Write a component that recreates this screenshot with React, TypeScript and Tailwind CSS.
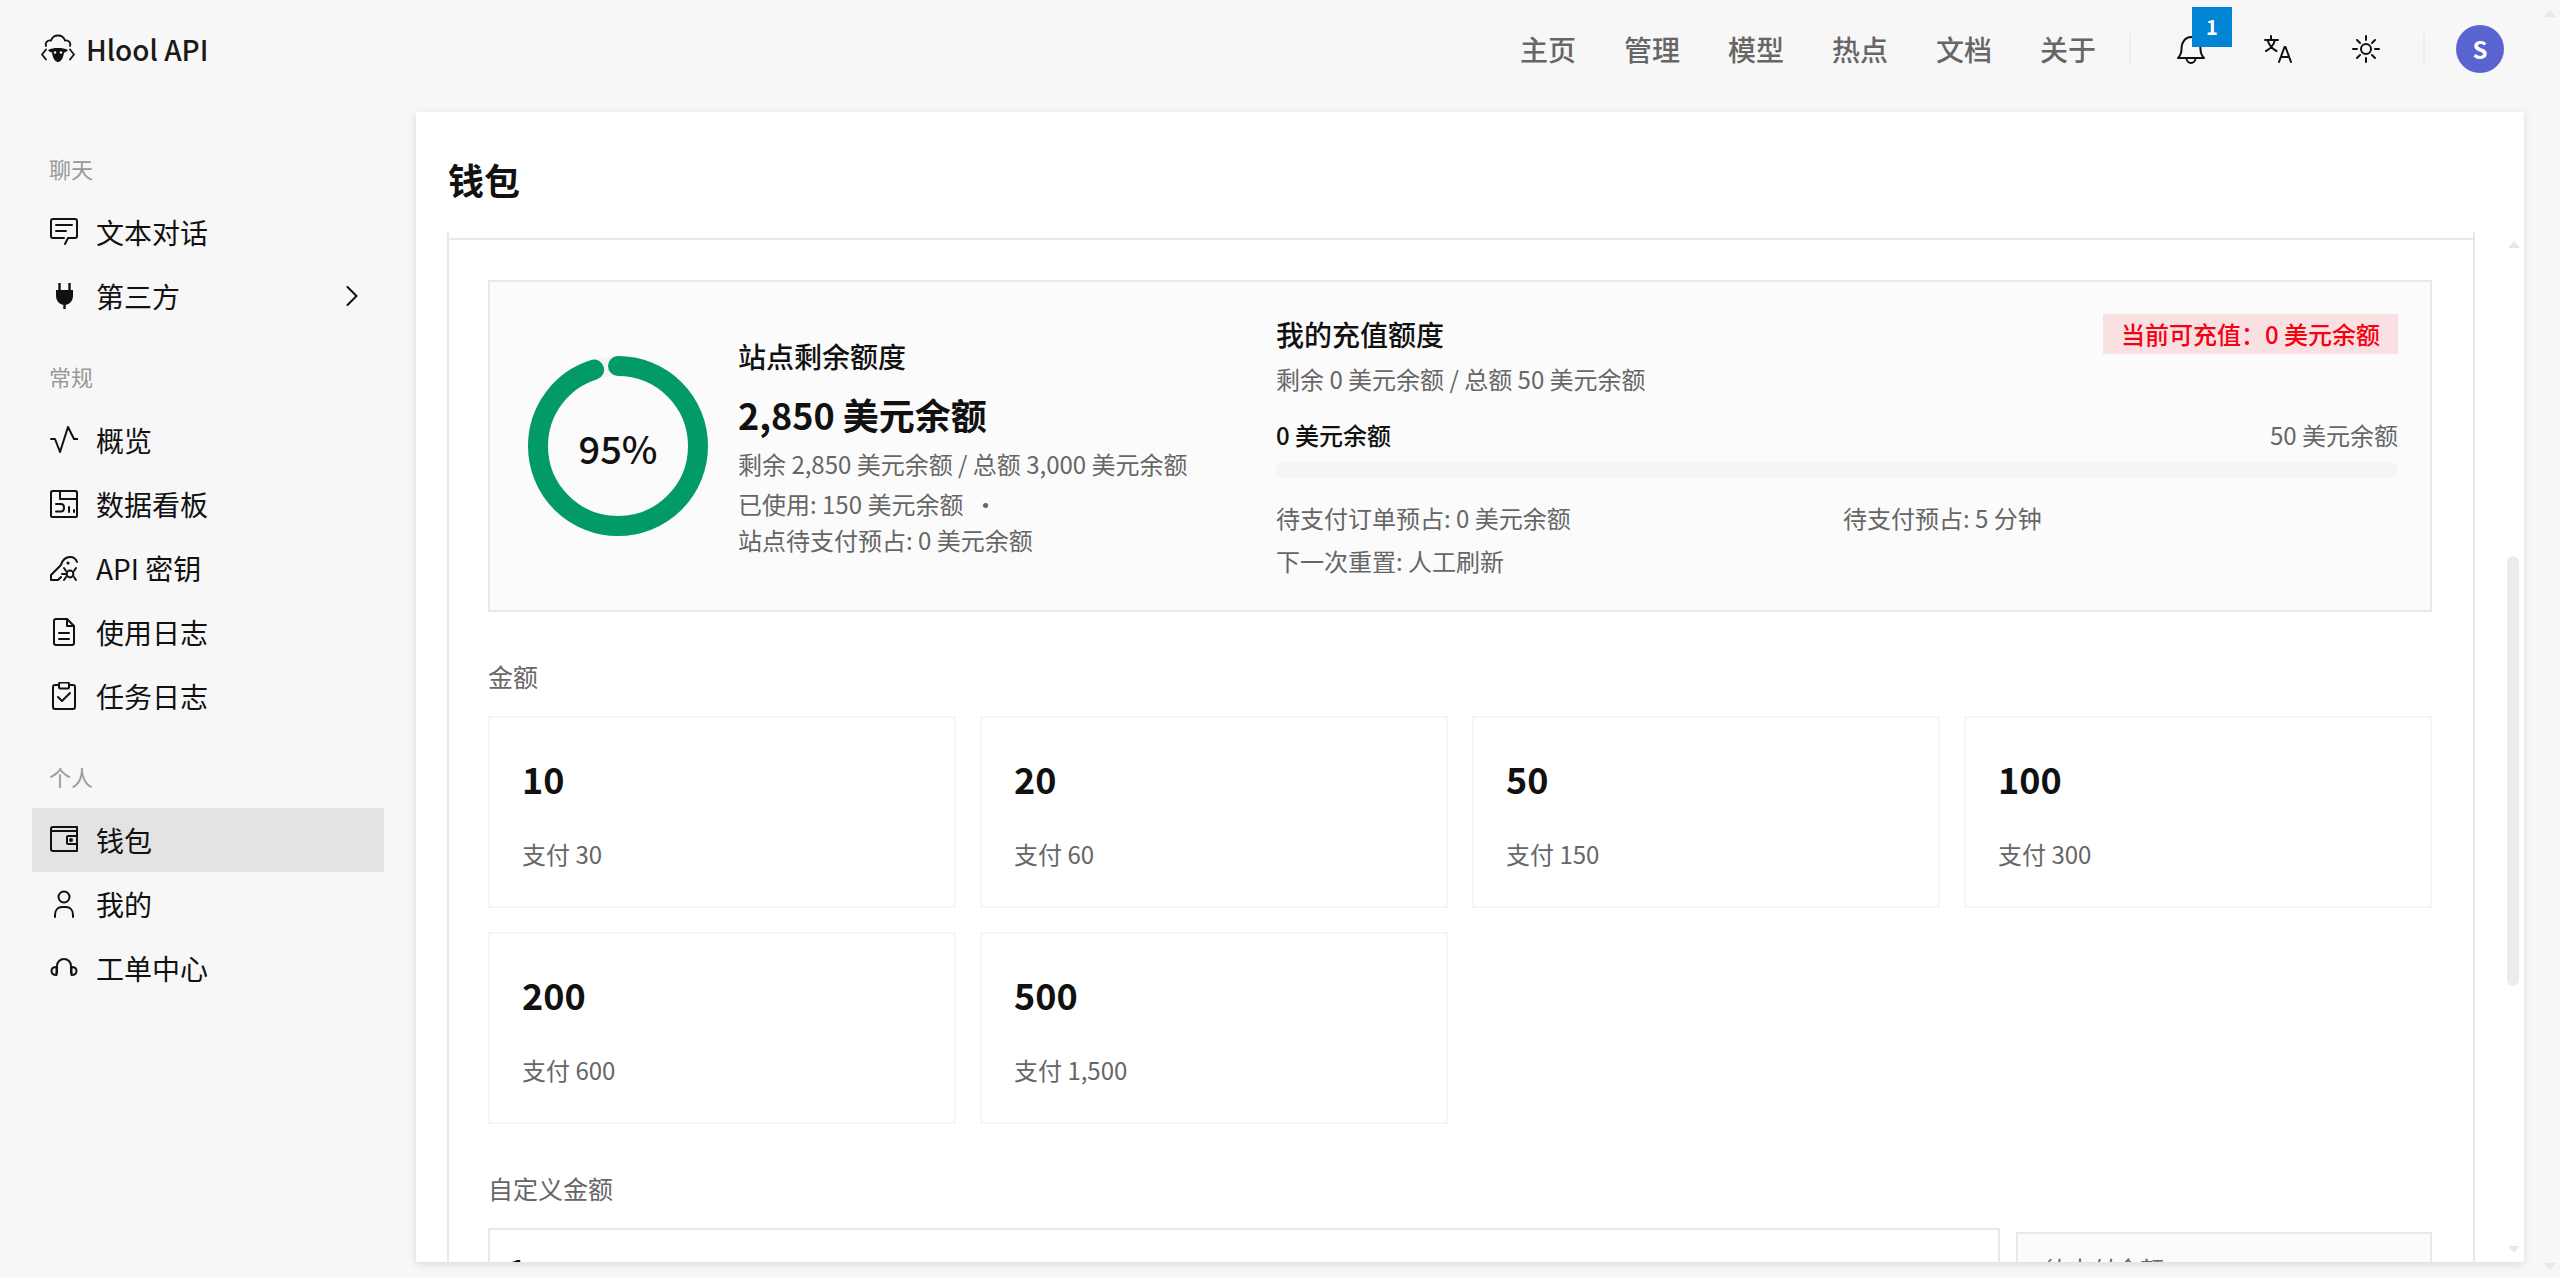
import React from "react";

const S = { fill: "none", stroke: "currentColor", strokeWidth: 2, strokeLinecap: "round" as const, strokeLinejoin: "round" as const };

function Ico({ children }: { children: React.ReactNode }) {
  return <svg width="28" height="28" viewBox="0 0 28 28" className="shrink-0 text-[#111]" {...S}>{children}</svg>;
}

const icons: Record<string, React.ReactNode> = {
  chat: <Ico><path d="M3 1h22a2 2 0 0 1 2 2v15a2 2 0 0 1-2 2h-7l-3 6M14 20H3a2 2 0 0 1-2-2V3a2 2 0 0 1 2-2" /><path d="M6 7h16M6 13h10" /></Ico>,
  plug: <Ico><path d="M6 8h17v6c0 5-4 9-8.500 9S6 19 6 14z" fill="currentColor" stroke="none" /><path d="M9.500 1v8M19.500 1v8M14.500 22v5" strokeLinecap="butt" strokeWidth="2.400" /></Ico>,
  activity: <Ico><path d="M1 13h4l5 13 8-25 6 12h4" /></Ico>,
  board: <Ico><rect x="1" y="1" width="26" height="26" rx="1.500" /><path d="M10 1v8M10 9h17M6 14h5c2 0 3 1 3 3.500S13 21.500 11 21.500H6M19 17v5M24 20v2" /></Ico>,
  key: <Ico><path d="M1 26v-5l10-10c1-5 5-8 9-8 3 0 6 2 7 5M1 26h7l3-3" /><circle cx="18" cy="9" r="1.600" fill="currentColor" stroke="none" /><circle cx="20" cy="20" r="3.400" /><path d="M14 14l2 3M26 14l-2 3M14 26l2-3M26 26l-2-3M12 20h4" /></Ico>,
  file: <Ico><path d="M6 1h11l7 7v17a2 2 0 0 1-2 2H6a2 2 0 0 1-2-2V3a2 2 0 0 1 2-2z" /><path d="M17 1v7h7M9 15h10M9 21h10" /></Ico>,
  clip: <Ico><path d="M9 4H5a2 2 0 0 0-2 2v20a2 2 0 0 0 2 2h18a2 2 0 0 0 2-2V6a2 2 0 0 0-2-2h-4" transform="translate(0 -1)" /><rect x="9" y="0.500" width="10" height="6" rx="1.500" /><path d="M8 15l4 4 8-8" /></Ico>,
  wallet: <Ico><path d="M3 1h24M27 1v24H3a2 2 0 0 1-2-2V3a2 2 0 0 1 2-2M1 5h26" /><rect x="17" y="10" width="10" height="8" rx="1" /><circle cx="21" cy="14" r="1" fill="currentColor" /></Ico>,
  user: <Ico><circle cx="14" cy="7" r="5.500" /><path d="M5 27v-2c0-5 3-8 7-8h4c4 0 7 3 7 8v2" /></Ico>,
  headset: <Ico><path d="M7 19v-7a7 7 0 0 1 14 0v7" /><path d="M6.500 13v8c-3 0-5-1-5-4s2-4 5-4zM21.500 13v8c3 0 5-1 5-4s-2-4-5-4z" /></Ico>,
};

const groups = [
  { title: "聊天", items: [{ i: "chat", t: "文本对话" }, { i: "plug", t: "第三方", more: true }] },
  { title: "常规", items: [{ i: "activity", t: "概览" }, { i: "board", t: "数据看板" }, { i: "key", t: "API 密钥" }, { i: "file", t: "使用日志" }, { i: "clip", t: "任务日志" }] },
  { title: "个人", items: [{ i: "wallet", t: "钱包", active: true }, { i: "user", t: "我的" }, { i: "headset", t: "工单中心" }] },
];

const amounts = [
  ["10", "支付 30"], ["20", "支付 60"], ["50", "支付 150"], ["100", "支付 300"], ["200", "支付 600"], ["500", "支付 1,500"],
];

function Sheep() {
  return (
    <svg width="34" height="30" viewBox="0 0 34 30" className="shrink-0 text-[#111]">
      <path d="M5 12c-1-3 1-6 5-5.500 1-3 4-5 7-5s6 2 7 5c4-.5 6 2.500 5 5.500" fill="none" stroke="currentColor" strokeWidth="1.800" strokeLinecap="round" />
      <path d="M5 15.500L1 20.500l4 5M29 15.500l4 5-4 5" fill="none" stroke="currentColor" strokeWidth="1.800" strokeLinecap="round" strokeLinejoin="round" />
      <path d="M7 16c3-1.500 6-2 10-2s7 .5 10 2c-1 1.500-2.500 2.500-4 2.500-.5 5-3 9.500-6 9.500s-5.500-4.500-6-9.500c-1.500 0-3-1-4-2.500z" fill="currentColor" />
      <circle cx="14" cy="18.500" r="1.200" fill="#f8f8f8" />
      <circle cx="20" cy="18.500" r="1.200" fill="#f8f8f8" />
    </svg>
  );
}

function Ring() {
  const r = 80;
  const c = 2 * Math.PI * r;
  return (
    <div className="relative w-[180px] h-[180px] shrink-0 mt-[42px] ml-[38px]">
      <svg width="180" height="180" viewBox="0 0 180 180" className="-rotate-90">
        <circle cx="90" cy="90" r={r} fill="none" stroke="#f3f3f3" strokeWidth="20" />
        <circle cx="90" cy="90" r={r} fill="none" stroke="#029b66" strokeWidth="20" strokeLinecap="round" strokeDasharray={`${c * 0.95} ${c}`} />
      </svg>
      <div className="absolute inset-0 flex items-center justify-center pt-[2px] text-[38px] font-medium text-[#111]">95%</div>
    </div>
  );
}

function Tri({ down, className }: { down?: boolean; className: string }) {
  return (
    <svg width="12" height="7" viewBox="0 0 12 7" className={`absolute ${className}`}>
      <path d={down ? "M0 0h12L6 7z" : "M0 7h12L6 0z"} fill="#e8e8e8" />
    </svg>
  );
}

export default function App() {
  return (
    <div className="relative h-screen overflow-hidden bg-[#f7f7f7] font-['Noto_Sans_CJK_SC','Noto_Sans',sans-serif] text-[#111]">
      <header className="flex h-[112px] items-center pb-[14px] pl-[26px] pr-[56px]">
        <div className="flex h-[52px] w-[194px] items-center gap-[11px] bg-[#f8f8f8] pl-[15px]">
          <Sheep />
          <span className="text-[28px] leading-none font-medium text-[#1a1a1a]">Hlool API</span>
        </div>
        <div className="flex-1" />
        <nav className="flex gap-[48px] text-[28px] leading-[40px] font-medium text-[#666]">
          {["主页", "管理", "模型", "热点", "文档", "关于"].map((t) => <span key={t}>{t}</span>)}
        </nav>
        <div className="ml-[33px] h-[32px] w-[2px] bg-[#eeeeee]" />
        <div className="relative ml-[46px] h-[30px] w-[28px]">
          <svg width="28" height="30" viewBox="0 0 28 30" fill="none" stroke="currentColor" strokeWidth="2" strokeLinecap="round" strokeLinejoin="round">
            <path d="M1 24c2-2 3.500-4 3.500-9 0-7 4-12 9.500-12s9.500 5 9.500 12c0 5 1.500 7 3.500 9zM9.500 24c0 3 2 5 4.500 5s4.500-2 4.500-5" />
          </svg>
          <span className="absolute left-[15px] top-[-27px] flex h-[40px] w-[40px] items-center justify-center bg-[#0085d4] text-[20px] font-bold text-white">1</span>
        </div>
        <svg width="28" height="28" viewBox="0 0 28 28" className="ml-[59px]" fill="none" stroke="currentColor" strokeWidth="2" strokeLinecap="round" strokeLinejoin="round">
          <path d="M7 1v3M1 5h13M3.500 5c1.500 5 5 9 9 11M11 5c-1 4-4.500 9-9 11M15 27l5.500-15h1L27 27M17 22h8" />
        </svg>
        <svg width="28" height="28" viewBox="0 0 28 28" className="ml-[60px]" fill="none" stroke="currentColor" strokeWidth="2" strokeLinecap="round">
          <circle cx="14" cy="14" r="5" />
          <path d="M14 1v4M14 23v4M1 14h4M23 14h4M5 5l3 3M20 20l3 3M5 23l3-3M20 8l3-3" />
        </svg>
        <div className="ml-[43px] h-[32px] w-[2px] bg-[#eeeeee]" />
        <div className="ml-[31px] flex h-[48px] w-[48px] items-center justify-center rounded-full bg-[#5a64cf] text-[24px] font-bold text-white">S</div>
      </header>

      <div className="flex">
        <aside className="w-[416px] shrink-0 pl-[32px] pr-[32px] pt-[42px]">
          {groups.map((g) => (
            <div key={g.title} className="mb-[34px]">
              <div className="mb-[16px] h-[30px] pl-[17px] text-[22px] leading-[28px] text-[#999]">{g.title}</div>
              {g.items.map((it: any) => (
                <div key={it.t} className={`flex h-[64px] items-center gap-[18px] pl-[18px] pr-[26px] text-[28px] ${it.active ? "bg-[#e3e3e3]" : ""}`}>
                  {icons[it.i]}
                  <span className="flex-1 whitespace-nowrap text-[#111]">{it.t}</span>
                  {it.more && (
                    <svg width="12" height="20" viewBox="0 0 12 20" fill="none" stroke="currentColor" strokeWidth="2" strokeLinecap="round" strokeLinejoin="round">
                      <path d="M1.500 1l9 9-9 9" />
                    </svg>
                  )}
                </div>
              ))}
            </div>
          ))}
        </aside>

        <main className="relative h-[1150px] w-[2108px] shrink-0 overflow-hidden bg-white shadow-[0_2px_8px_rgba(0,0,0,0.12)]">
          <div className="h-[120px] pl-[32px] pt-[45px] text-[36px] leading-[44px] font-bold text-[#111]">钱包</div>
          <div className="ml-[31px] h-[1030px] w-[2028px] overflow-hidden border-x-2 border-[#e8e8e8] pt-[6px]">
            <div className="border-t-2 border-[#e8e8e8] pl-[39px] pr-[41px] pt-[40px]">
              <section className="flex border-2 border-[#e8e8e8] bg-[#fbfbfb] pb-[31px] pt-[32px]">
                <Ring />
                <div className="ml-[30px] mt-[22px] w-[538px] shrink-0">
                  <div className="text-[28px] leading-[40px] font-medium">站点剩余额度</div>
                  <div className="mt-[12px] text-[36px] leading-[52px] font-bold">2,850 美元余额</div>
                  <div className="mt-[6px] text-[24px] leading-[36px] text-[#666]">剩余 2,850 美元余额 / 总额 3,000 美元余额</div>
                  <div className="mt-[4px] flex gap-[10px] text-[24px] leading-[36px] text-[#666]"><span>已使用: 150 美元余额</span><span>·</span></div>
                  <div className="text-[24px] leading-[36px] text-[#666]">站点待支付预占: 0 美元余额</div>
                </div>
                <div className="w-[1122px] shrink-0">
                  <div className="flex h-[40px] items-center justify-between">
                    <span className="text-[28px] font-medium">我的充值额度</span>
                    <span className="flex h-[40px] items-center bg-[#f9e0e2] px-[18px] text-[24px] font-medium text-[#f5000f]">当前可充值：0 美元余额</span>
                  </div>
                  <div className="mt-[7px] text-[24px] leading-[36px] text-[#666]">剩余 0 美元余额 / 总额 50 美元余额</div>
                  <div className="mt-[20px] flex justify-between text-[24px] leading-[36px]">
                    <span className="font-medium">0 美元余额</span>
                    <span className="text-[#666]">50 美元余额</span>
                  </div>
                  <div className="mt-[9px] h-[16px] rounded-[8px] bg-[#f5f5f5]" />
                  <div className="mt-[22px] grid grid-cols-2 gap-x-[12px] gap-y-[7px] text-[24px] leading-[36px] text-[#666]">
                    <span>待支付订单预占: 0 美元余额</span>
                    <span>待支付预占: 5 分钟</span>
                    <span>下一次重置: 人工刷新</span>
                  </div>
                </div>
              </section>

              <div className="mt-[46px] text-[25px] leading-[36px] text-[#666]">金额</div>
              <div className="mt-[22px] grid grid-cols-4 gap-[24px]">
                {amounts.map(([a, p]) => (
                  <div key={a} className="h-[192px] border-2 border-[#f5f5f5] pl-[32px] pt-[36px]">
                    <div className="text-[36px] leading-[48px] font-bold">{a}</div>
                    <div className="mt-[34px] text-[24px] leading-[36px] text-[#666]">{p}</div>
                  </div>
                ))}
              </div>

              <div className="mt-[46px] text-[25px] leading-[36px] text-[#666]">自定义金额</div>
              <div className="mt-[22px] flex items-start gap-[16px]">
                <div className="flex h-[84px] w-[1512px] items-center border-2 border-[#e8e8e8] pl-[17px] text-[36px] font-medium">1</div>
                <div className="mt-[4px] flex h-[90px] w-[416px] items-start justify-between border-2 border-[#e8e8e8] bg-[#fbfbfb] pl-[26px] pr-[22px] pt-[17px] text-[24px] leading-[36px] text-[#666]">
                  <span>待支付金额</span>
                  <span className="mt-[1px] text-[28px] font-bold text-[#111]">3</span>
                </div>
              </div>
            </div>
          </div>
          <Tri className="left-[2092px] top-[129px]" />
          <div className="absolute left-[2091px] top-[444px] h-[430px] w-[12px] rounded-[6px] bg-[#ececec]" />
          <Tri down className="left-[2092px] top-[1134px]" />
        </main>
      </div>

      <Tri className="left-[2544px] top-[10px]" />
      <Tri down className="left-[2544px] top-[1263px]" />
    </div>
  );
}
